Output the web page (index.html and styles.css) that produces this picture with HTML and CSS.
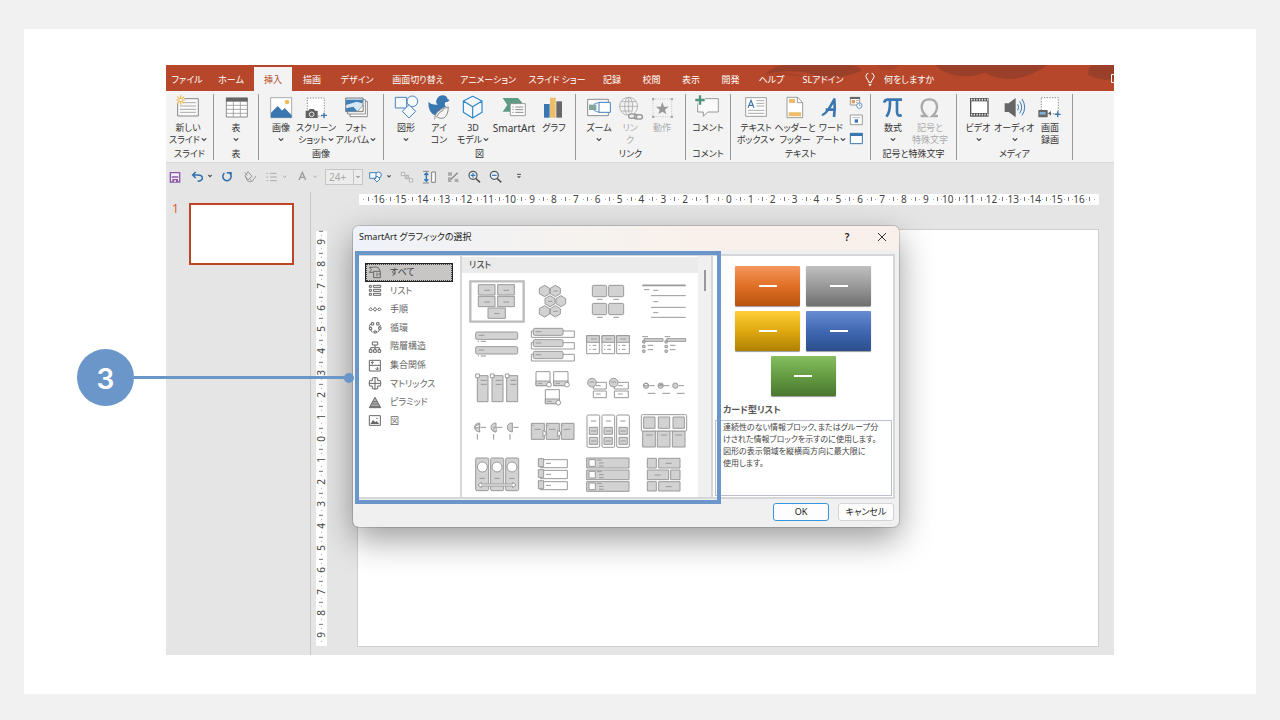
FILE: index.html
```
<!DOCTYPE html>
<html lang="ja">
<head>
<meta charset="utf-8">
<title>SmartArt グラフィックの選択</title>
<link rel="stylesheet" href="styles.css">
</head>
<body>
<svg class="defs" aria-hidden="true">
  <symbol id="caret" viewBox="0 0 15 12"><path d="M2 3l5.500 5.500L13 3" fill="none" stroke="#444" stroke-width="3"/></symbol>
</svg>
<main class="card">
<div class="app">

<nav class="tabs">
  <svg class="swirl" viewBox="-105 15 1047 78" aria-hidden="true">
    <path fill="#9a3f29" d="M-105 42Q-80 18-50 15H150Q190 22 182 34Q120 58 60 52Q0 22-105 42zM408 15H742Q700 46 655 54Q600 64 555 38Q500 56 460 44Q420 36 408 15zM865 45Q862 20 880 15H942V58Q910 66 865 45z"/>
    <path fill="#a8432a" d="M-105 42Q-40 30 20 50Q-40 46-105 42zM230 15H300Q280 34 245 30z"/>
  </svg>
  <button>ファイル</button><button>ホーム</button><button class="on">挿入</button><button>描画</button><button>デザイン</button><button>画面切り替え</button><button>アニメーション</button><button>スライド ショー</button><button>記録</button><button>校閲</button><button>表示</button><button>開発</button><button>ヘルプ</button><button>SLアドイン</button>
  <button class="tell"><svg width="10" height="14" viewBox="0 0 30 42"><path fill="none" stroke="#fff" stroke-width="3" d="M11 28Q10 22 6 18A12 12 0 1 1 24 18Q20 22 19 28zM11 34h8M13 38h4"/></svg>何をしますか</button>
  <svg class="corner" width="3" height="10" viewBox="0 0 3 10"><path d="M3 .5H.5v8H3" fill="none" stroke="#fff"/></svg>
</nav>

<div class="ribbon">
  <section class="group g48"><div class="items">
    <button class="w44"><svg viewBox="18 105 132 75"><path fill="#fafafa" stroke="#888" stroke-width="3" d="M53 116h62v52H53z"/><path stroke="#aaa" stroke-width="3" d="M60 128h48M60 138h48M60 148h48M60 157h48"/><circle cx="62" cy="120" r="12" fill="#f6f6f6"/><path stroke="#e8b44d" stroke-width="3.500" d="M62 106v28M48 120h28M52 110l20 20M72 110l-20 20"/><circle cx="62" cy="120" r="4" fill="#fff"/></svg><span>新しい<br>スライド<svg class="caret"><use href="#caret"/></svg></span></button>
  </div><h2>スライド</h2></section>

  <section class="group g45"><div class="items">
    <button class="w44"><svg viewBox="162 105 132 75"><path fill="#fff" stroke="#777" stroke-width="2.500" d="M199 114h63v57h-63z"/><path fill="#666" d="M198 113h65v12h-65z"/><path stroke="#999" stroke-width="2.500" d="M199 136h63M199 148h63M199 160h63M220 125v46M241 125v46"/></svg><span>表<br><svg class="caret"><use href="#caret"/></svg></span></button>
  </div><h2>表</h2></section>

  <section class="group g125"><div class="items">
    <button class="w34"><svg viewBox="312 105 102 75"><path fill="#fff" stroke="#999" stroke-width="2.500" d="M332 113h63v60h-63z"/><path fill="#3a77b0" d="M333 158l20-20 34 35h-54zM366 152l8-8 21 22v7h-10z"/><circle cx="381" cy="126" r="7" fill="#eebb58"/></svg><span>画像<br><svg class="caret"><use href="#caret"/></svg></span></button>
    <button class="w36"><svg viewBox="414 105 108 75"><path fill="#fff" stroke="#777" stroke-width="2.500" stroke-dasharray="4 4" d="M442 114h51v54h-51z"/><path fill="#606060" d="M437 152h8l4-5h12l4 5h8v22h-36z"/><circle cx="455" cy="163" r="7" fill="#606060" stroke="#eee" stroke-width="3"/><path stroke="#3a77b0" stroke-width="4" d="M492 158v17M483 166h18"/></svg><span>スクリーン<br>ショット<svg class="caret"><use href="#caret"/></svg></span></button>
    <button class="w44"><svg viewBox="522 105 132 75"><path fill="#fff" stroke="#777" stroke-width="2.500" d="M570 124h52v46h-52z"/><path fill="#fff" stroke="#777" stroke-width="2.500" d="M563 119h53v43h-53z"/><path fill="#d8e6f2" stroke="#666" stroke-width="2.500" d="M557 114h52v41h-52z"/><path fill="#3f7fb8" d="M558 119h50v11l-18-5-32 10zM558 154v-9l22-5 12 14z"/><path fill="#fff" stroke="#777" stroke-width="2" d="M609 136l-16 18h16z"/></svg><span>フォト<br>アルバム<svg class="caret"><use href="#caret"/></svg></span></button>
  </div><h2>画像</h2></section>

  <section class="group g192"><div class="items">
    <button class="w34"><svg viewBox="687 105 102 75"><g fill="#f6f9fc" stroke="#4583bb" stroke-width="3"><circle cx="757" cy="124" r="16"/><path d="M706 112h34v32h-34z"/><path d="M747 134l20 20-20 20-20-20z"/></g></svg><span>図形<br><svg class="caret"><use href="#caret"/></svg></span></button>
    <button class="w32"><svg viewBox="789 105 96 75"><path fill="#3a77b0" d="M805 126q10 10 28 8q-8-8-2-18q7-11 19-10q11 2 13 12l6 2q-4 7-13 7q-4 8 2 13q-22 6-30 27q-24-6-23-41z"/><path fill="#f4f4f4" stroke="#777" stroke-width="2.500" d="M824 178q0-15 8-22q8-9 33-15q-1 27-14 33q-11 4-21-4q6-14 21-20"/></svg><span>アイ<br>コン</span></button>
    <button class="w36"><svg viewBox="885 105 108 75"><path fill="#f6faff" stroke="#2c86c7" stroke-width="3.500" stroke-linejoin="round" d="M910 123l28-14 28 14v34l-28 17-28-17zM910 123l28 17 28-17M938 140v34"/></svg><span>3D<br>モデル<svg class="caret"><use href="#caret"/></svg></span></button>
    <button class="w46"><svg viewBox="33 105 138 75"><path fill="#5c9b84" d="M68 114h46l13 14-9 8H90v19H68l14-20z"/><path fill="#fff" stroke="#888" stroke-width="2.500" d="M91 131h45v36H91z"/><path stroke="#888" stroke-width="3" d="M97 141h4M106 141h24M97 149h4M106 149h24M97 157h4M106 157h24"/></svg><span><b class="latin">SmartArt</b></span></button>
    <button class="w34"><svg viewBox="171 105 102 75"><path fill="#3a77b0" d="M192 132h17v41h-17z"/><path fill="#edbd69" d="M210 113h17v60h-17z"/><path fill="#666" d="M229 124h17v49h-17z"/></svg><span>グラフ</span></button>
  </div><h2>図</h2></section>

  <section class="group g110 pad7"><div class="items">
    <button class="w32"><svg viewBox="309 105 96 75"><path fill="#fafafa" stroke="#777" stroke-width="2.500" d="M323 118h62v49h-62z"/><path fill="#84a79d" d="M327 134h22v16h-22z"/><path stroke="#4583bb" stroke-width="2.500" d="M341 133l16-6M341 151l16 6"/><path fill="#fff" stroke="#4583bb" stroke-width="3" d="M357 127h34v30h-34z"/></svg><span>ズーム<br><svg class="caret"><use href="#caret"/></svg></span></button>
    <button class="w30 dim"><svg viewBox="405 105 90 75"><g fill="none" stroke="#aaa" stroke-width="2.500"><circle cx="446" cy="139" r="27"/><ellipse cx="446" cy="139" rx="12" ry="27"/><path d="M446 112v54M419 139h54M424 125h44M424 153h30"/></g><path fill="#f3f3f3" d="M443 158h28v20h-28z"/><g fill="none" stroke="#999" stroke-width="4.500"><rect x="446" y="162" width="24" height="13" rx="6"/><rect x="463" y="164" width="24" height="13" rx="6"/></g></svg><span>リン<br>ク</span></button>
    <button class="w34 dim"><svg viewBox="495 105 102 75"><path fill="none" stroke="#bbb" stroke-width="2.500" stroke-dasharray="3 4" d="M519 117h56v53h-56z"/><path fill="#aaa" d="M516 114h7v7h-7zM572 114h7v7h-7zM516 167h7v7h-7zM572 167h7v7h-7z"/><path fill="#999" d="M547 126l5 14h14l-11 9 4 14-12-8-12 8 4-14-11-9h14z"/></svg><span>動作</span></button>
  </div><h2>リンク</h2></section>

  <section class="group g45"><div class="items">
    <button class="w44"><svg viewBox="618 105 132 75"><path fill="#fafafa" stroke="#888" stroke-width="2.500" d="M653 116h62v40h-32l-13 13v-13h-17z"/><path stroke="#f3f3f3" stroke-width="14" d="M660 106v30M645 121h30"/><path stroke="#4f937b" stroke-width="7" d="M660 106v28M646 120h28"/></svg><span>コメント</span></button>
  </div><h2>コメント</h2></section>

  <section class="group g140"><div class="items">
    <button class="w40"><svg viewBox="768 105 120 75"><path fill="#fff" stroke="#888" stroke-width="2.500" d="M797 113h62v56h-62z"/><path fill="none" stroke="#3a77b0" stroke-width="3.500" d="M804 143l9-22 9 22M807 136h12"/><path stroke="#999" stroke-width="2.500" d="M829 122h24M829 130h24M829 138h24M804 151h49M804 160h49"/></svg><span>テキスト<br>ボックス<svg class="caret"><use href="#caret"/></svg></span></button>
    <button class="w38"><svg viewBox="888 105 114 75"><path fill="#fff" stroke="#888" stroke-width="2.500" d="M921 112h32l15 16v45h-47z"/><path fill="#edbd69" d="M927 117h18v12h-18zM926 157h37v12h-37z"/><path fill="none" stroke="#888" stroke-width="2.500" d="M952 112v16h16"/></svg><span>ヘッダーと<br>フッター</span></button>
    <button class="w34"><svg viewBox="42 105 102 75"><path fill="none" stroke="#3a77b0" stroke-width="8" stroke-linejoin="round" d="M66 163q10 5 37-45q3 25-1 53M77 149h26"/></svg><span>ワード<br>アート<svg class="caret"><use href="#caret"/></svg></span></button>
    <button class="w18" aria-label="日付と時刻"><svg class="tall" viewBox="144 102 54 156"><path fill="#fff" stroke="#888" stroke-width="2.500" d="M151 109h28v23h-28z"/><path fill="#666" d="M150 108h30v6h-30z"/><path fill="#e59a5a" d="M155 117h10v10h-10z"/><path stroke="#aaa" stroke-width="3" d="M168 119h8M168 125h5"/><circle cx="178" cy="134" r="8" fill="#fff" stroke="#4583bb" stroke-width="2.500"/><path fill="none" stroke="#4583bb" stroke-width="2" d="M178 129v5h4"/><path fill="#fff" stroke="#888" stroke-width="2.500" d="M151 162h36v29h-36z"/><path stroke="#aaa" stroke-width="2.500" d="M157 170h24"/><path fill="#3a77b0" d="M164 175h10v10h-10z"/><path fill="#fff" stroke="#3a77b0" stroke-width="3" d="M151 217h36v31h-36z"/><path fill="#3a77b0" d="M150 216h38v9h-38z"/></svg></button>
  </div><h2>テキスト</h2></section>

  <section class="group g86"><div class="items">
    <button class="w34"><svg viewBox="228 105 102 75"><path fill="none" stroke="#3a77b0" stroke-width="8" d="M252 128q3-9 11-9h43M270 120q1 38-11 50M291 120v36q1 15 14 9"/></svg><span>数式<br><svg class="caret"><use href="#caret"/></svg></span></button>
    <button class="w40 dim"><svg viewBox="330 105 120 75"><path fill="none" stroke="#aaa" stroke-width="7" d="M362 168h17q-15-14-14-29q2-21 23-21t23 21q1 15-14 29h17"/></svg><span>記号と<br>特殊文字</span></button>
  </div><h2>記号と特殊文字</h2></section>

  <section class="group g116"><div class="items">
    <button class="w32"><svg viewBox="486 105 96 75"><path fill="#555" d="M510 114h56v56h-56z"/><path fill="#fff" d="M514 124h48v35h-48z"/><path stroke="#eee" stroke-width="5" stroke-dasharray="4 4" d="M513 119h52M513 164h52"/></svg><span>ビデオ<br><svg class="caret"><use href="#caret"/></svg></span></button>
    <button class="w40"><svg viewBox="582 105 120 75"><path fill="#666" d="M614 130h12l21-16v58l-21-16h-12z"/><path fill="none" stroke="#3a77b0" stroke-width="3" d="M653 133q6 9 0 18M659 124q12 18 0 36M666 117q16 25 0 49"/></svg><span>オーディオ<br><svg class="caret"><use href="#caret"/></svg></span></button>
    <button class="w32"><svg viewBox="702 105 96 75"><path fill="#fff" stroke="#777" stroke-width="2.500" stroke-dasharray="4 4" d="M724 113h51v48h-51z"/><path fill="#666" d="M715 150h28v22h-28zM744 160l9-7v14z"/><path fill="#7db0dc" d="M719 156h18v8h-18z"/><path stroke="#3a77b0" stroke-width="4" d="M773 154v18M764 163h18"/></svg><span>画面<br>録画</span></button>
  </div><h2>メディア</h2></section>
</div>

<div class="qat">
  <button aria-label="保存"><svg width="19" height="14" viewBox="18 330 57 42"><path fill="#f3edf7" stroke="#8b5aa8" stroke-width="4" d="M31 338h28v28H31z"/><path fill="#8b5aa8" d="M35 349h20v4H35zM37 357h17v9H37z"/><path fill="#fff" d="M43 360h4v6h-4z"/></svg></button>
  <button aria-label="元に戻す"><svg width="33" height="14" viewBox="75 330 99 42"><path fill="none" stroke="#2f6fae" stroke-width="4.500" d="M107 336l-9 9 9 9M99 345h14q14 0 14 9t-14 10"/><path fill="none" stroke="#555" stroke-width="3.500" d="M145 345l5 5 5-5"/></svg></button>
  <button aria-label="やり直し"><svg width="19" height="14" viewBox="174 330 57 42"><path fill="none" stroke="#2f6fae" stroke-width="4.500" d="M193 339q-8 9-2 18q8 9 18 2q9-10 0-20M200 338h13v12"/></svg></button>
  <button aria-label="書式のコピー" disabled><svg width="25" height="14" viewBox="231 330 75 42"><path fill="none" stroke="#999" stroke-width="3" d="M254 338l8 8M264 335l12 14-12 10-9-11zM257 352l6 11 10 3M270 357l6 8 12-17"/></svg></button>
  <button aria-label="箇条書き" disabled><svg width="30" height="14" viewBox="306 330 90 42"><path stroke="#aaa" stroke-width="3" d="M320 340h4M330 340h20M320 351h4M330 351h20M320 362h4M330 362h20"/><path fill="none" stroke="#aaa" stroke-width="3" d="M369 347l5 5 5-5"/></svg></button>
  <button aria-label="フォント" disabled><svg width="32" height="14" viewBox="396 330 96 42"><path fill="none" stroke="#999" stroke-width="4" d="M417 360l10-23 10 23M421 352h12"/><path fill="none" stroke="#aaa" stroke-width="3" d="M460 347l5 5 5-5"/></svg></button>
  <select aria-label="フォント サイズ" disabled><option>24+</option></select>
  <button aria-label="図形"><svg width="32" height="14" viewBox="612 330 96 42"><g fill="#f3f7fb" stroke="#4583bb" stroke-width="3"><circle cx="655" cy="345" r="9"/><path d="M629 338h19v17h-19zM651 348l9 9-9 9-9-9z"/></g><path fill="none" stroke="#555" stroke-width="3.500" d="M682 346l5 5 5-5"/></svg></button>
  <button aria-label="配置" disabled><svg width="22" height="14" viewBox="708 330 66 42"><g fill="#eee" stroke="#aaa" stroke-width="2.500"><path d="M724 337h10v10h-10zM748 356h10v10h-10z"/><path fill="#ccc" d="M736 346h10v10h-10z"/></g></svg></button>
  <button aria-label="サイズ"><svg width="24" height="14" viewBox="774 330 72 42"><path stroke="#555" stroke-width="3" stroke-dasharray="4 2" d="M790 334h18M790 369h18"/><path fill="none" stroke="#2f75b5" stroke-width="4" d="M799 338v26M793 345l6-6 6 6M793 358l6 6 6-6"/><path fill="#fff" stroke="#666" stroke-width="2.500" d="M815 336h11v31h-11z"/></svg></button>
  <button aria-label="スタイル" disabled><svg width="22" height="14" viewBox="846 330 66 42"><path fill="#aaa" d="M864 337h12v10h-12zM864 352h10v14h-10zM884 356h11v10h-11z"/><path stroke="#888" stroke-width="4" d="M893 338l-20 20"/></svg></button>
  <button aria-label="拡大"><svg width="20" height="14" viewBox="912 330 60 42"><circle cx="939" cy="346" r="12" fill="#e9f1f8" stroke="#555" stroke-width="3.500"/><path stroke="#2f75b5" stroke-width="3.500" d="M939 339v14M932 346h14"/><path stroke="#555" stroke-width="4.500" d="M947 355l13 12"/></svg></button>
  <button aria-label="縮小"><svg width="24" height="14" viewBox="12 330 72 42"><circle cx="43" cy="346" r="12" fill="#e9f1f8" stroke="#555" stroke-width="3.500"/><path stroke="#2f75b5" stroke-width="3.500" d="M36 346h14"/><path stroke="#555" stroke-width="4.500" d="M51 355l13 12"/></svg></button>
  <button aria-label="その他"><svg width="22" height="14" viewBox="84 330 66 42"><path stroke="#555" stroke-width="3" d="M111 343h12"/><path fill="#555" d="M111 349h12l-6 6z"/></svg></button>
</div>

<div class="workspace">
  <aside class="slides"><span>1</span><button class="thumb" aria-label="スライド 1"></button></aside>
  <div class="editor">
    <div class="hruler"><i>16</i><i>15</i><i>14</i><i>13</i><i>12</i><i>11</i><i>10</i><i>9</i><i>8</i><i>7</i><i>6</i><i>5</i><i>4</i><i>3</i><i>2</i><i>1</i><i>0</i><i>1</i><i>2</i><i>3</i><i>4</i><i>5</i><i>6</i><i>7</i><i>8</i><i>9</i><i>10</i><i>11</i><i>12</i><i>13</i><i>14</i><i>15</i><i>16</i></div>
    <div class="vruler"><i>9</i><i>8</i><i>7</i><i>6</i><i>5</i><i>4</i><i>3</i><i>2</i><i>1</i><i>0</i><i>1</i><i>2</i><i>3</i><i>4</i><i>5</i><i>6</i><i>7</i><i>8</i><i>9</i></div>
    <div class="slide"></div>
  </div>
</div>

<div class="dialog" role="dialog" aria-labelledby="dlg-title">
  <header><h1 id="dlg-title">SmartArt グラフィックの選択</h1><button class="help">?</button><button class="close" aria-label="閉じる"><svg width="10" height="10" viewBox="0 0 10 10"><path d="M1 1l8 8M9 1l-8 8" stroke="#333"/></svg></button></header>
  <div class="panes">
    <div class="chooser">
      <div class="cats">
        <button class="on"><svg viewBox="624 228 42 39"><path d="M641 232h-13l7 7-7 8h11M642 231h7q10 2 11 12M641 244h20v19h-20zM651 248v11M655 252h5"/></svg>すべて</button>
        <button><svg viewBox="624 283 42 39"><path d="M628 287h6v6h-6zM640 287h22v6h-22zM628 299h6v6h-6zM640 299h22v6h-22zM628 311h6v6h-6zM640 311h22v6h-22z"/></svg>リスト</button>
        <button><svg viewBox="624 338 42 39"><path d="M632 352l5 5-5 5-5-5zM645 351l5 6-5 6-5-6zM658 352l5 5-5 5-5-5z"/></svg>手順</button>
        <button><svg viewBox="624 393 42 39"><path d="M634 398h7v7h-7zM650 398h7v7h-7zM656 411h7v7h-7zM642 423h7v6h-7zM628 412h7v7h-7zM634 401l-6 5 3 6M662 405l-4 6M653 427l6-8M637 427l-5-7"/></svg>循環</button>
        <button><svg viewBox="624 448 42 39"><path d="M637 454h16v9h-16zM645 463v8M632 477v-6h26v6M645 471v6M628 477h8v8h-8zM641 477h8v8h-8zM654 477h8v8h-8z"/></svg>階層構造</button>
        <button><svg viewBox="624 505 42 39"><path d="M628 509h33v32h-33zM628 524h33M637 521v-8l-4 4M637 513l4 4M652 529v8M647 533l5 5 5-5"/></svg>集合関係</button>
        <button><svg viewBox="624 561 42 39"><path d="M637 564q8-3 16 0v8h8q3 8 0 16h-8v8q-8 3-16 0v-8h-8q-3-8 0-16h8zM645 563v35M627 580h35"/></svg>マトリックス</button>
        <button><svg viewBox="624 616 42 39"><path fill="#bbb" d="M645 620l17 31h-34zM638 633h14M634 640h22M630 647h30"/></svg>ピラミッド</button>
        <button><svg viewBox="624 672 42 39"><path d="M628 677h33v29h-33z"/><path fill="#666" stroke="none" d="M631 702l8-12 7 7 4-4 8 9z"/><circle cx="651" cy="685" r="1"/></svg>図</button>
      </div>
      <div class="gallery">
        <h3>リスト</h3>
        <div class="cells">
          <button><svg viewBox="27 165 168 129"><path fill="#fff" stroke="#bcbcbc" stroke-width="7" d="M31 169h160v121H31z"/><path d="M55 179h50v31H55zM113 179h50v31h-50zM55 214h50v31H55zM113 214h50v31h-50zM84 249h52v31H84zM73 196h17M130 196h17M73 231h17M130 231h17M102 266h17"/></svg></button>
          <button><svg viewBox="195 165 168 129"><path d="M238 190l16-9 15 9v16l-15 9-16-9zM271 190l15-9 15 9v16l-15 9-15-9zM255 221l15-9 15 9v15l-15 9-15-9zM288 221l15-9 14 9v15l-14 9-15-9zM238 251l16-9 15 9v16l-15 9-16-9zM271 251l15-9 15 9v16l-15 9-15-9zM280 198h13M264 229h13M280 259h13"/></svg></button>
          <button><svg viewBox="363 165 168 129"><rect x="397" y="181" width="43" height="34" rx="4"/><rect x="446" y="181" width="45" height="34" rx="4"/><rect x="397" y="235" width="43" height="34" rx="4"/><rect x="446" y="235" width="45" height="34" rx="4"/><path d="M411 223h17M460 223h17M411 277h17M460 277h17"/></svg></button>
          <button><svg viewBox="531 165 168 129"><path d="M547 181h130" stroke-width="5"/><path d="M552 194h16M580 196h15M573 212h104M580 230h15M573 247h104M580 263h15M573 277h104"/></svg></button>

          <button><svg viewBox="27 294 168 129"><rect x="47" y="321" width="126" height="22" rx="4"/><rect x="47" y="365" width="126" height="22" rx="4"/><path d="M56 331h17M56 375h17M62 349h16M53 349h4M62 393h16M53 393h4"/></svg></button>
          <button><svg viewBox="195 294 168 129"><path class="w" d="M214 318h129v19H214zM214 353h129v19H214zM214 388h129v20H214z"/><rect x="220" y="310" width="89" height="21" rx="4"/><rect x="220" y="344" width="89" height="21" rx="4"/><rect x="220" y="379" width="89" height="22" rx="4"/><path d="M227 320h17M227 354h17M227 389h17"/></svg></button>
          <button><svg viewBox="363 294 168 129"><path class="w" d="M380 332h38v54h-38zM426 332h38v54h-38zM470 332h38v54h-38z"/><path d="M380 332h38v20h-38zM426 332h38v20h-38zM470 332h38v20h-38zM393 342h17M437 342h17M481 342h17M398 361h11M398 373h11M442 361h11M442 373h11M486 361h11M486 373h11M388 361h4M388 373h4M432 361h4M432 373h4M476 361h4M476 373h4"/></svg></button>
          <button><svg viewBox="531 294 168 129"><path d="M552 341h57v8h-57zM620 341h57v8h-57zM547 335h17M614 335h17M563 361h16M563 374h16M630 361h16M630 374h16M548 347h7v7h-7zM548 361h7v7h-7zM548 375h7v7h-7zM615 347h7v7h-7zM615 361h7v7h-7zM615 375h7v7h-7z"/></svg></button>

          <button><svg viewBox="27 3 168 129"><path d="M52 32h32v78H52zM96 32h33v78H96zM140 32h33v78h-33zM62 46h18M107 46h18M151 46h18M62 58h18M107 58h18M151 58h18"/><path class="w" d="M47 27h11v11H47zM91 27h11v11H91zM136 27h11v11h-11z"/></svg></button>
          <button><svg viewBox="195 3 168 129"><path class="w" d="M228 20h42v42h-42zM281 20h43v42h-43zM256 74h42v42h-42z"/><path d="M228 48h42v14h-42zM281 48h43v14h-43zM256 102h42v14h-42zM234 55h13M287 55h13M262 109h13"/><g class="w"><circle cx="267" cy="59" r="7"/><circle cx="321" cy="59" r="7"/><circle cx="295" cy="113" r="7"/></g></svg></button>
          <button><svg viewBox="363 3 168 129"><path class="w" d="M400 52h39v20h-39zM400 78h39v20h-39zM463 52h42v20h-42zM463 78h42v20h-42z"/><circle cx="396" cy="53" r="13"/><circle cx="461" cy="53" r="13"/><path d="M389 51h14M454 51h14M408 62h14M408 87h14M474 62h14M474 87h14"/></svg></button>
          <button><svg viewBox="531 3 168 129"><circle cx="558" cy="62" r="8"/><circle cx="602" cy="62" r="8"/><circle cx="646" cy="62" r="8"/><path class="w" d="M550 62h16q-8-15-16 0M596 62h14q-7-9-14 0"/><path d="M568 62h16M612 62h16M656 62h16M563 85h23M607 85h23M651 85h23"/></svg></button>

          <button><svg viewBox="27 132 168 129"><path d="M59 174v27q-15-2-15-14t15-13zM108 174v27q-15-2-15-14t15-13zM157 174v27q-15-2-15-14t15-13zM62 187h16M111 187h16M160 187h16M52 207v17M101 207v17M150 207v17"/><path class="w" d="M46 184l13-7v8l-13 5zM102 187h6v13h-6z"/></svg></button>
          <button><svg viewBox="195 132 168 129"><path d="M214 175h39v48h-39zM259 175h39v48h-39zM304 175h38v48h-38zM223 193h20M267 193h20M311 193h20M217 181h4M262 181h4M307 181h4"/><path class="w" d="M249 196l9 5v8l-9 6zM293 196l9 5v8l-9 6z"/></svg></button>
          <button><svg viewBox="363 132 168 129"><g class="w"><rect x="381" y="150" width="38" height="97" rx="4"/><rect x="426" y="150" width="38" height="97" rx="4"/><rect x="470" y="150" width="38" height="97" rx="4"/></g><path d="M388 187h25v21h-25zM388 217h25v21h-25zM432 187h25v21h-25zM432 217h25v21h-25zM477 187h25v21h-25zM477 217h25v21h-25zM393 168h16M437 168h16M481 168h16M393 198h16M393 228h16M437 198h16M437 228h16M481 198h16M481 228h16"/></svg></button>
          <button><svg viewBox="531 132 168 129"><path d="M548 198h38v48h-38zM592 198h38v48h-38zM637 198h38v48h-38z"/><rect class="w" x="544" y="149" width="136" height="49" rx="3"/><path d="M551 156h34v34h-34zM595 156h34v34h-34zM639 156h34v34h-34zM558 210h20M602 210h20M646 210h20"/></svg></button>

          <button><svg viewBox="27 261 168 129"><rect x="47" y="279" width="39" height="98" rx="4"/><rect x="92" y="279" width="39" height="98" rx="4"/><rect x="137" y="279" width="39" height="98" rx="4"/><g class="w"><circle cx="67" cy="306" r="15"/><circle cx="111" cy="306" r="15"/><circle cx="156" cy="306" r="15"/><path d="M54 360l10-8v5h94v-5l10 8-10 8v-5H64v5z"/></g><path d="M58 340h17M102 340h17M147 340h17"/></svg></button>
          <button><svg viewBox="195 261 168 129"><path class="w" d="M241 284h81v24h-81zM241 316h81v25h-81zM241 350h81v24h-81z"/><path d="M235 281h16v24h-16zM235 314h16v23h-16zM235 347h16v24h-16zM258 295h15M258 328h15M258 361h15"/></svg></button>
          <button><svg viewBox="363 261 168 129"><path d="M380 279h127v30H380zM380 315h127v29H380zM380 350h127v29H380zM411 285h14M417 294h14M417 303h14M411 320h14M417 329h14M417 338h14M411 355h14M417 364h14M417 373h14"/><path class="w" d="M387 284h19v20h-19zM387 319h19v20h-19zM387 354h19v20h-19z"/></svg></button>
          <button><svg viewBox="531 261 168 129"><path d="M562 280h27v29h-27zM596 280h64v29h-64zM562 315h64v29h-64zM632 315h28v29h-28zM562 350h27v28h-27zM596 350h64v28h-64zM617 295h18M584 330h18M617 365h18"/></svg></button>
        </div>
      </div>
      <div class="scroll"><div class="bar"></div></div>
    </div>
    <div class="preview">
      <div class="tiles"><b class="orange"></b><b class="gray"></b><b class="yellow"></b><b class="blue"></b><b class="green"></b></div>
      <h3>カード型リスト</h3>
      <p>連続性のない情報ブロック、またはグループ分<br>けされた情報ブロックを示すのに使用します。<br>図形の表示領域を縦横両方向に最大限に<br>使用します。</p>
    </div>
  </div>
  <footer><button class="ok">OK</button><button>キャンセル</button></footer>
  <div class="frame"></div>
  <div class="callout"><span class="num">3</span><span class="line"></span><span class="dot"></span></div>
</div>

</div>
</main>
</body>
</html>
```

FILE: styles.css
```
* { box-sizing: border-box; }
body {
  margin: 0;
  min-height: 100vh;
  padding: 29px 24px 26px;
  display: flex;
  background: #f1f1f1;
  font-family: "Noto Sans", "Noto Sans CJK JP", sans-serif;
  font-size: 9px;
  line-height: 12px;
  font-feature-settings: "palt";
  color: #333;
}
button, select {
  margin: 0; padding: 0; border: 0; background: none;
  font: inherit; color: inherit; white-space: nowrap;
  font-feature-settings: inherit;
}
h1, h2, h3, p { margin: 0; font-size: 9px; font-weight: 400; }
.defs { position: absolute; width: 0; height: 0; }
.card { flex: 1; display: flex; padding: 36px 142px 39px; background: #fff; }
.app { flex: 1; min-width: 0; display: flex; flex-direction: column; position: relative; background: #e5e5e5; }

/* tab strip */
.tabs {
  position: relative;
  display: grid;
  grid-template-columns: 42px 46px 38px 40px 50px 72px 68px 70px 40px 39px 40px 39px 43px 60px auto 1fr;
  padding-top: 2px;
  height: 26px;
  background: #b7472a;
  color: #fff;
}
.tabs button { position: relative; padding-top: 2px; }
.tabs .on { background: #f3f3f3; color: #b7472a; }
.tabs .tell { display: flex; align-items: center; gap: 9px; padding-left: 12px; }
.swirl { position: absolute; right: 0; top: 0; width: 349px; height: 26px; }
.corner { justify-self: end; align-self: center; position: relative; }

/* ribbon */
.ribbon { display: flex; height: 72px; padding: 3px 0 1px; background: #f3f3f3; border-bottom: 1px solid #dadada; }
.group { display: flex; flex-direction: column; margin-bottom: 1px; border-right: 1px solid #999; }
.group h2 { text-align: center; }
.items { height: 56px; display: flex; padding: 1px 0 0 5px; }
.g48 { width: 48px; } .g45 { width: 45px; } .g125 { width: 125px; } .g192 { width: 192px; }
.g110 { width: 110px; } .g140 { width: 140px; } .g86 { width: 86px; } .g116 { width: 116px; }
.g48 .items, .g45 .items { padding-left: 0; }
.pad7 .items { padding-left: 7px; }
.items button { display: flex; flex-direction: column; align-items: center; flex: none; }
.items button > svg { width: 100%; height: 25px; }
.items button > .tall { height: 52px; }
.items span { display: flow-root; margin-top: 2px; text-align: center; }
.w18 { width: 18px; } .w30 { width: 30px; } .w32 { width: 32px; } .w34 { width: 34px; } .w36 { width: 36px; }
.w38 { width: 38px; } .w40 { width: 40px; } .w44 { width: 44px; } .w46 { width: 46px; }
.caret { width: 6px; height: 5px; margin-left: 1px; vertical-align: 1px; }
.latin { font-size: 10px; font-weight: 400; }
.items .dim { color: #aaa; }

/* quick access bar */
.qat { display: flex; align-items: center; height: 27px; }
.qat button { display: flex; }
.qat select {
  appearance: none; width: 38px; height: 16px; margin: 0 1px; padding-left: 3px;
  border: 1px solid #c6c6c6; color: #aaa; font-size: 10px; line-height: 14px; opacity: 1;
  background:
    linear-gradient(#c6c6c6, #c6c6c6) 27px 0 / 1px 100% no-repeat,
    linear-gradient(#aaa, #aaa) 30px 6px / 4px 1px no-repeat,
    linear-gradient(#aaa, #aaa) 31px 7px / 2px 1px no-repeat,
    #ececec;
}

/* workspace */
.workspace { flex: 1; display: flex; min-height: 465px; }
.slides { width: 145px; display: flex; align-items: flex-start; gap: 9px; margin-top: 2px; padding: 11px 0 0 6px; border-right: 1px solid #c8c8c8; }
.slides span { width: 8px; font-size: 12px; color: #d4603f; }
.thumb { width: 105px; height: 62px; background: #fff; border: 2px solid #bd4526; }
.editor {
  flex: 1; display: grid;
  grid-template-columns: 11px 1fr; grid-template-rows: 11px 1fr;
  column-gap: 30px; row-gap: 24px;
  padding: 4px 15px 8px 5px;
}
.hruler, .vruler { display: flex; background: #fff; color: #444; }
.hruler {
  grid-column: 2; margin-left: 2px; padding: 0 9px;
  background:
    linear-gradient(#aaa, #aaa) 4px 5px / 1px 1px no-repeat,
    linear-gradient(#777, #777) right 9px top 3px / 1px 4px no-repeat,
    linear-gradient(#aaa, #aaa) right 4px top 5px / 1px 1px no-repeat,
    #fff;
}
.vruler { flex-direction: column; margin: 2px 0 1px; }
.hruler i, .vruler i { flex: 1; font-style: normal; font-size: 10px; line-height: 11px; text-align: center; }
.hruler i {
  background:
    linear-gradient(#777, #777) 0 3px / 1px 4px no-repeat,
    linear-gradient(#aaa, #aaa) 4px 5px / 1px 1px no-repeat,
    linear-gradient(#aaa, #aaa) 18px 5px / 1px 1px no-repeat;
}
.vruler i {
  writing-mode: vertical-rl; transform: rotate(180deg);
  background:
    linear-gradient(#777, #777) 4px 100% / 4px 1px no-repeat,
    linear-gradient(#aaa, #aaa) 5px 4px / 1px 1px no-repeat,
    linear-gradient(#aaa, #aaa) 5px 17px / 1px 1px no-repeat;
}
.slide { background: #fff; border: 1px solid #cfcfcf; }

/* dialog */
.dialog {
  position: absolute; left: 187px; top: 161px; width: 546px;
  display: flex; flex-direction: column;
  background: #f0f0f0; border-radius: 6px;
  box-shadow: 0 0 0 1px rgba(0, 0, 0, .15), 0 12px 34px rgba(0, 0, 0, .4);
}
.dialog header {
  display: flex; align-items: center; height: 24px; padding: 0 6px 2px 6px;
  border-radius: 6px 6px 0 0; color: #222;
  background: linear-gradient(90deg, #eff2f9, #f6f2ee 45%, #faf0eb 65%);
}
.dialog h1 { flex: 1; }
.help { width: 24px; font-size: 10px; font-weight: 600; }
.close { display: flex; justify-content: center; width: 22px; margin-left: 12px; }
.panes { display: flex; margin: 4px 4px 0; height: 245px; }
.chooser { flex: none; display: grid; grid-template-columns: 103px 236px 13px; width: 356px; border: 2px solid #d4d6da; background: #fff; }
.cats { display: grid; grid-auto-rows: 1fr; height: 167px; margin-top: 7px; padding: 0 9px 0 6px; position: relative; color: #666; }
.cats::after { content: ""; position: absolute; right: 0; top: -7px; width: 2px; height: 241px; background: #d8d8da; }
.cats button { display: flex; align-items: center; gap: 8px; padding: 0 2px; border: 1px solid transparent; }
.cats .on { background: #c8c6c4; border-color: #222; outline: 1px dotted #444; outline-offset: -2px; color: #444; }
.cats svg { width: 14px; height: 13px; fill: none; stroke: #666; stroke-width: 3; }
.gallery h3 { margin-top: 1px; height: 16px; line-height: 16px; padding-left: 7px; background: #ebebeb; color: #555; font-weight: 500; }
.cells { display: grid; grid-template-columns: repeat(4, 56px); grid-auto-rows: 43px; margin: 7px 0 0 7px; }
.cells button { display: flex; }
.cells svg { width: 56px; height: 43px; fill: #d2d2d2; stroke: #999; stroke-width: 3; }
.cells .w { fill: #fff; }
.scroll { background: #f0f0f0; padding: 14px 0 0 6px; }
.bar { width: 2px; height: 21px; background: #999; }
.preview { flex: 1; min-width: 0; display: flex; flex-direction: column; padding: 10px 1px 1px; border: 2px solid #d4d6da; border-left: 0; background: #fff; }
.tiles { display: flex; flex-wrap: wrap; justify-content: center; gap: 5px 6px; padding: 0 20px; }
.tiles b { width: 65px; height: 40px; display: grid; place-items: center; border-radius: 1px; box-shadow: 0 1px 1px #999; }
.tiles b::after { content: ""; width: 18px; height: 2px; background: #fff; }
.orange { background: linear-gradient(#f3975b, #e06f25 50%, #b8530e); }
.gray { background: linear-gradient(#c0c0c0, #999 50%, #707070); }
.yellow { background: linear-gradient(#ffce38, #dfa910 50%, #ae8000); }
.blue { background: linear-gradient(#678cd2, #4068b2 50%, #2c4f8d); }
.green { background: linear-gradient(#85be60, #659c43 50%, #4b762f); }
.preview h3 { margin-top: 8px; padding-left: 9px; font-weight: 700; color: #555; }
.preview p { flex: 1; margin: 4px 0 0 1px; padding: 0 0 0 7px; border: 1px solid #bcc0c8; white-space: nowrap; font-size: 8px; color: #444; }
.dialog footer { display: flex; justify-content: flex-end; gap: 9px; padding: 4px 5px 6px; }
.dialog footer button { width: 56px; height: 18px; background: #fdfdfd; border: 1px solid #d4d4d4; border-radius: 3px; color: #222; }
.dialog footer .ok { border-color: #3a96dd; }

/* annotation over the dialog */
.frame { position: absolute; left: 2px; top: 25px; width: 366px; height: 253px; border: 4px solid #6b96ca; }
.callout { position: absolute; left: -276px; top: 123px; display: flex; align-items: center; }
.num {
  width: 57px; height: 57px; border-radius: 50%; background: #6b96ca; color: #fff;
  text-align: center; font: 600 28px/60px Inter, sans-serif;
}
.line { width: 214px; height: 3px; background: #6b96ca; }
.dot { width: 10px; height: 10px; margin-left: -4px; border-radius: 50%; background: #6b96ca; }
```
